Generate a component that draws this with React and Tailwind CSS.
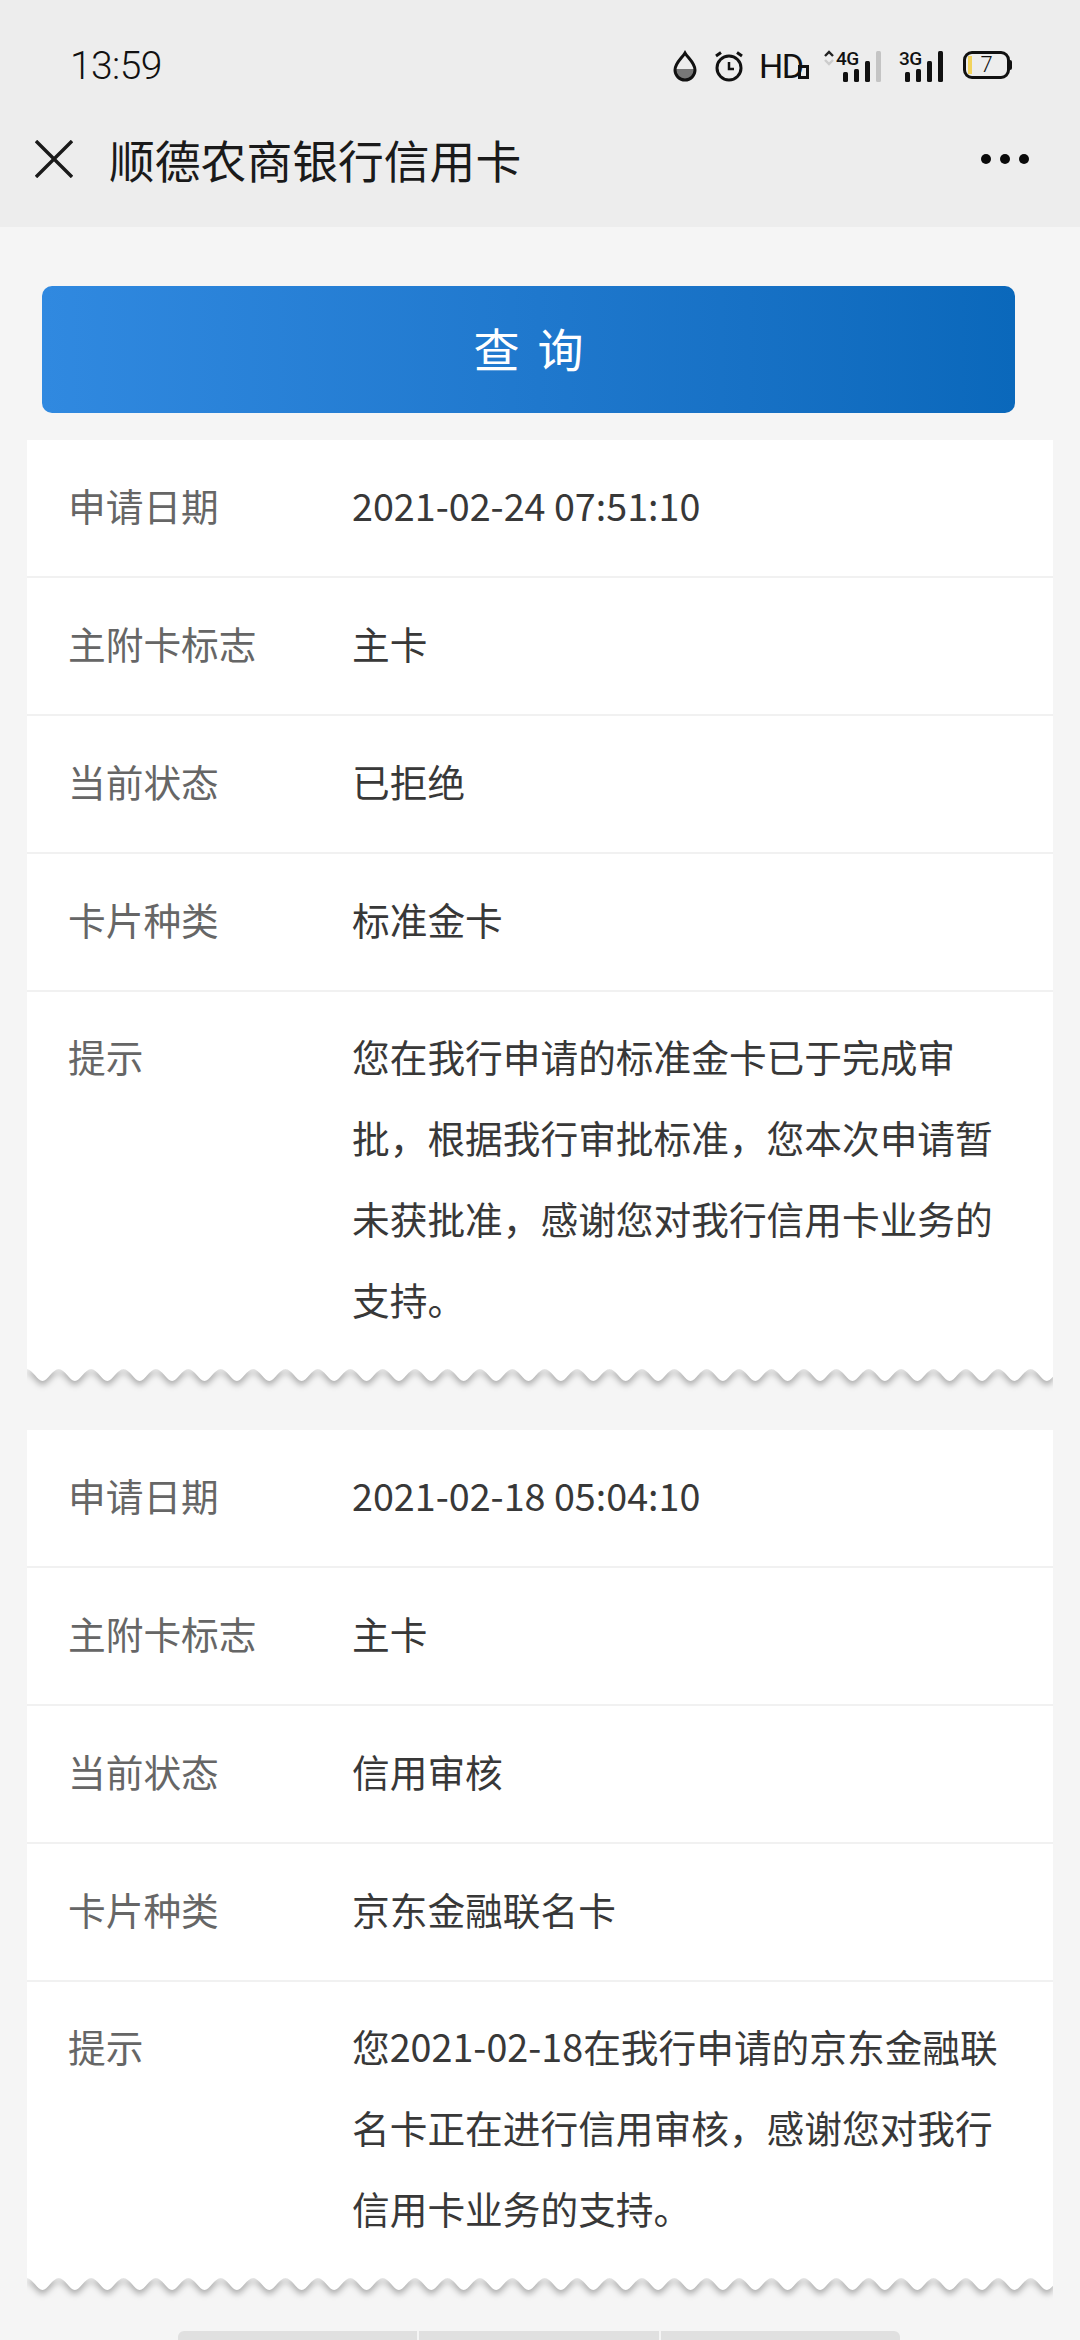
const waveD = (() => {
  const w = 1026, p = 32.4, top = 2, bot = 14;
  const phase = 15.5;
  const pts = [];
  for (let i = -1; i < 34; i++) { pts.push(phase + i * p); }
  const rev = pts.filter(v => v < w + p).reverse();
  let d = `M0 0 H${w} V8`;
  for (const v of rev) {
    const peakR = v + p / 2;
    const peakL = v - p / 2;
    if (peakR <= w + p && peakL >= -p) {
      d += ` L${peakR} ${top}`;
      d += ` C${peakR - 6} ${top} ${v + 5} ${bot} ${v} ${bot}`;
      d += ` C${v - 5} ${bot} ${peakL + 6} ${top} ${peakL} ${top}`;
    }
  }
  d += ` L0 10 Z`;
  return d;
})();

function Wave() {
  return (
    <div className="h-[34px] overflow-hidden">
      <svg width="1026" height="34" viewBox="0 0 1026 34" className="block drop-shadow-[0_4px_3px_rgba(0,0,0,0.3)]">
        <path d={waveD} fill="#ffffff" />
      </svg>
    </div>
  );
}

function Row({ label, value, last }) {
  return (
    <div className={`flex pl-[41px] ${last ? "pt-[34px] pb-[28px]" : "h-[138px] items-center border-b-2 border-[#f1f1f1] pb-[6px]"}`}>
      <div className={`w-[284px] shrink-0 text-[#666666] ${last ? "leading-[81px] -mt-[11px]" : ""}`}>{label}</div>
      <div className={`w-[650px] text-[#383838] ${last ? "leading-[81px] -mt-[11px]" : ""}`}>{value}</div>
    </div>
  );
}

function Card({ date, status, kind, tip, className }) {
  return (
    <div className={`mx-[27px] text-[37.7px] ${className || ""}`}>
      <div className="bg-white">
        <Row label="申请日期" value={date} />
        <Row label="主附卡标志" value="主卡" />
        <Row label="当前状态" value={status} />
        <Row label="卡片种类" value={kind} />
        <Row label="提示" value={tip} last />
      </div>
      <Wave />
    </div>
  );
}

function Drop() {
  return (
    <svg width="26" height="32" viewBox="0 0 26 32">
      <defs>
        <clipPath id="dc"><path d="M13 3 C10 8 3 13 3 20 A10 10 0 0 0 23 20 C23 13 16 8 13 3Z" /></clipPath>
      </defs>
      <rect x="0" y="19" width="26" height="13" fill="#777777" clipPath="url(#dc)" />
      <path d="M13 3 C10 8 3 13 3 20 A10 10 0 0 0 23 20 C23 13 16 8 13 3Z" fill="none" stroke="#111" strokeWidth="3" />
    </svg>
  );
}

function Alarm() {
  return (
    <svg width="30" height="32" viewBox="0 0 30 32" fill="none" stroke="#111">
      <circle cx="15" cy="18" r="12" strokeWidth="3" />
      <path d="M15 12 V19 H20" strokeWidth="2.5" />
      <path d="M2 6 L7 2.5 M28 6 L23 2.5" strokeWidth="3" />
    </svg>
  );
}

function Bars({ grayLast }) {
  return (
    <svg width="44" height="32" viewBox="0 0 44 32">
      <rect x="6" y="22" width="5" height="10" rx="1.5" fill="#111" />
      <rect x="17" y="19" width="5" height="13" rx="1.5" fill="#111" />
      <rect x="28" y="11" width="5" height="21" rx="1.5" fill="#111" />
      <rect x="39" y="1" width="5" height="31" rx="1.5" fill={grayLast ? "#c4c4c4" : "#111"} />
    </svg>
  );
}

function Arrows() {
  return (
    <svg width="12" height="16" viewBox="0 0 12 16">
      <path d="M2 6 L6 2 L10 6" fill="none" stroke="#222" strokeWidth="2.4" />
      <path d="M2 10 L6 14 L10 10" fill="none" stroke="#cccccc" strokeWidth="2.4" />
    </svg>
  );
}

function StatusBar() {
  return (
    <div className="flex h-[100px] items-start justify-between pl-[70px] pr-[68px] pt-[43px] font-['Roboto',sans-serif] text-[#111]">
      <span className="text-[39px] leading-[46px] font-light tracking-[-0.6px] text-[#111]">13:59</span>
      <div className="flex items-start pt-[7px]">
        <Drop />
        <div className="ml-[16px]"><Alarm /></div>
        <div className="relative ml-[15px] flex h-[32px] w-[50px] items-start">
          <span className="text-[34px] leading-[32px] tracking-[-1.5px] font-['Roboto',sans-serif]">HD</span>
          <span className="absolute right-0 bottom-[3px] h-[14px] w-[11px] border-[3px] border-[#111]" />
        </div>
        <div className="relative ml-[14px] h-[32px] w-[58px]">
          <span className="absolute left-0 top-0"><Arrows /></span>
          <span className="absolute left-[13px] -top-[1px] text-[19px] font-medium leading-[20px] tracking-[-0.5px]">4G</span>
          <span className="absolute right-0 top-0"><Bars grayLast /></span>
        </div>
        <div className="relative ml-[18px] h-[32px] w-[44px]">
          <span className="absolute left-0 -top-[1px] text-[19px] font-medium leading-[20px] tracking-[-0.5px]">3G</span>
          <Bars />
        </div>
        <div className="relative ml-[20px] mt-[1px] h-[28px] w-[49px]">
          <div className="absolute left-0 top-0 h-[28px] w-[47px] rounded-[9px] border-[3px] border-[#111]">
            <div className="absolute left-[2px] top-[2px] h-[18px] w-[4px] bg-[#f2d35c]" />
            <div className="absolute inset-0 text-center text-[22px] font-light leading-[22px]">7</div>
          </div>
          <div className="absolute right-0 top-[9px] h-[10px] w-[2px] rounded-r bg-[#111]" />
        </div>
      </div>
    </div>
  );
}

function Header() {
  return (
    <div className="flex h-[127px] items-center justify-between pb-[9px] pl-[35px] pr-[51px]">
      <div className="flex items-center">
        <svg width="38" height="38" viewBox="0 0 38 38" fill="none" stroke="#1a1a1a" strokeWidth="3.4">
          <path d="M1 1 L37 37 M37 1 L1 37" />
        </svg>
        <span className="ml-[36px] text-[45.8px] leading-[60px] text-[#1a1a1a]">顺德农商银行信用卡</span>
      </div>
      <div className="flex gap-[9px]">
        <span className="h-[10px] w-[10px] rounded-full bg-[#0a0a0a]" />
        <span className="h-[10px] w-[10px] rounded-full bg-[#0a0a0a]" />
        <span className="h-[10px] w-[10px] rounded-full bg-[#0a0a0a]" />
      </div>
    </div>
  );
}

export default function App() {
  return (
    <div className="h-[2340px] w-[1080px] overflow-hidden bg-[#f5f5f5] font-['Noto_Sans_CJK_SC','Noto_Sans',sans-serif]">
      <div className="bg-[#ededed]">
        <StatusBar />
        <Header />
      </div>
      <div className="pl-[42px] pt-[59px]">
        <div className="flex h-[127px] w-[973px] items-center justify-center rounded-[10px] bg-gradient-to-r from-[#3089e0] to-[#0a68bb] pb-[4px] text-[46px] tracking-[18px] text-white">
          <span className="pl-[18px]">查询</span>
        </div>
      </div>
      <Card
        className="mt-[27px]"
        date="2021-02-24 07:51:10"
        status="已拒绝"
        kind="标准金卡"
        tip="您在我行申请的标准金卡已于完成审批，根据我行审批标准，您本次申请暂未获批准，感谢您对我行信用卡业务的支持。"
      />
      <Card
        className="mt-[29px]"
        date="2021-02-18 05:04:10"
        status="信用审核"
        kind="京东金融联名卡"
        tip="您2021-02-18在我行申请的京东金融联名卡正在进行信用审核，感谢您对我行信用卡业务的支持。"
      />
      <div className="ml-[178px] mt-[21px] flex w-[722px] gap-[2px]">
        <div className="h-[12px] flex-1 rounded-tl-[6px] bg-[#e0e0e0]" />
        <div className="h-[12px] flex-1 bg-[#e0e0e0]" />
        <div className="h-[12px] flex-1 rounded-tr-[6px] bg-[#e0e0e0]" />
      </div>
    </div>
  );
}
